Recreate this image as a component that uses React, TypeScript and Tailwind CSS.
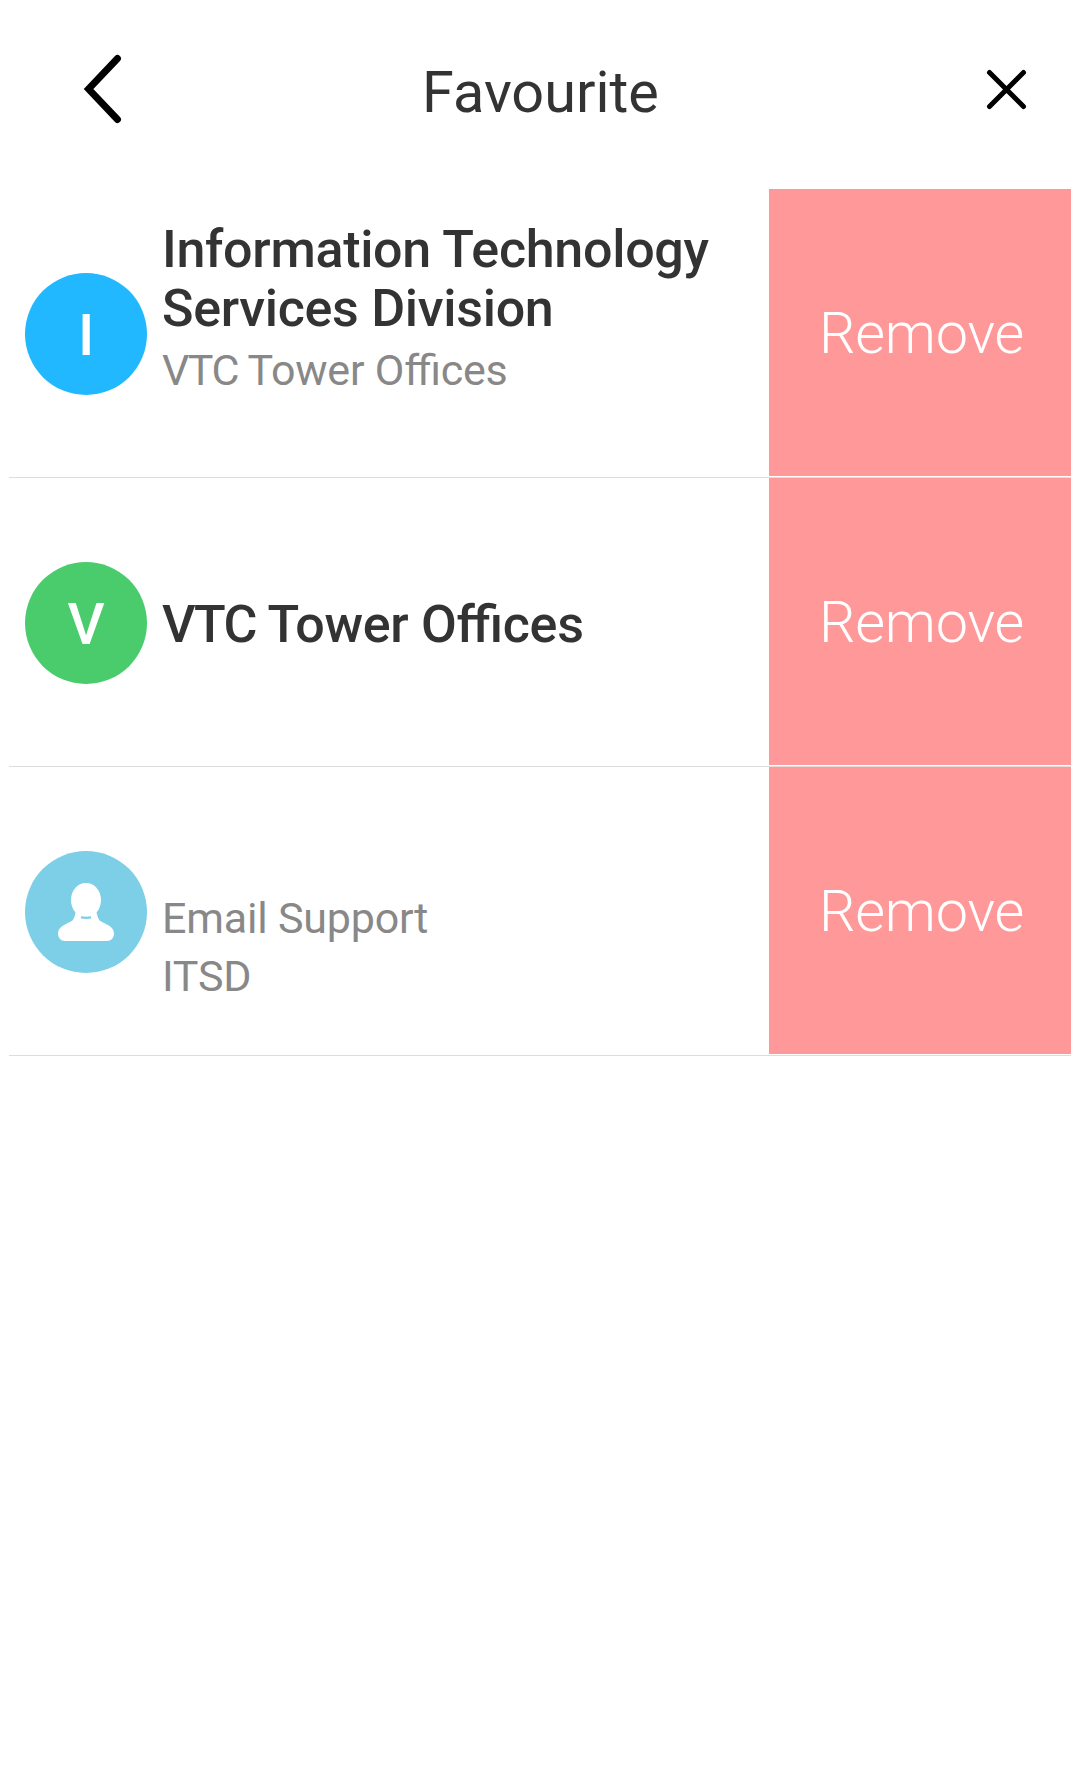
import React from 'react';

const items = [
  { id: 1, initial: 'I', color: 'bg-[#22b8ff]', offset: 'pt-[31px]', title: 'Information Technology Services Division', lines: ['VTC Tower Offices'] },
  { id: 2, initial: 'V', color: 'bg-[#4acc6d]', offset: 'pt-[117px]', title: 'VTC Tower Offices', lines: [] },
  { id: 3, initial: '', color: 'bg-[#7dcfe8]', offset: 'pt-[119px]', title: '', lines: ['Email Support', 'ITSD'] },
];

const PersonIcon: React.FC = () => (
  <svg className="mt-[-4px]" width="56" height="58" viewBox="0 0 56 58" fill="#fff">
    <path d="M28 0C36.500 0 43 7.500 43 17C43 22 41.500 26 38.500 29.500C39.500 33 40 35 41.500 37.500C47 41 56 43 56 50.500C56 55 53 58 49 58H7C3 58 0 55 0 50.500C0 43 9 41 14.500 37.500C16 35 17 33 17.500 29.500C14.500 26 13 22 13 17C13 7.500 19.500 0 28 0Z" />
    <path d="M23 34.400Q28 35.200 33 34.400" fill="none" stroke="#7dcfe8" strokeWidth="2.200" />
  </svg>
);

// tightens the acronym at the start of a label
const Label: React.FC<{ text: string }> = ({ text }) =>
  text.startsWith('VTC') ? (
    <>
      <span className="tracking-[-1.5px]">VTC</span>
      {text.slice(3)}
    </>
  ) : (
    <>{text}</>
  );

const App: React.FC = () => {
  return (
    <div className="min-h-screen bg-white font-['Roboto',sans-serif] text-[#333]">
      <header className="flex h-[189px] items-start justify-between px-[52px]">
        <button className="mt-[54px] w-[72px] pl-[31px]">
          <svg width="40" height="70" viewBox="0 0 40 70" fill="none" stroke="#000" strokeWidth="6.9" strokeLinecap="round">
            <path d="M34.500 4.500L5.500 35L34.500 65.500" />
          </svg>
        </button>
        <h1 className="mt-[57.5px] pl-px text-[57.6px] leading-[70px]">Favourite</h1>
        <button className="mt-[68px] flex w-[72px] justify-end">
          <svg width="43" height="43" viewBox="0 0 43 43" stroke="#000" strokeWidth="5" strokeLinecap="round">
            <path d="M4.500 4.500L38.500 38.500M38.500 4.500L4.500 38.500" />
          </svg>
        </button>
      </header>
      <ul className="mx-[9px]">
        {items.map((item) => (
          <li key={item.id} className="flex h-[289px] border-b border-[#ddd]">
            <div className={`ml-[16.4px] mt-[84.4px] flex size-[121.5px] shrink-0 items-center justify-center rounded-full pt-[4px] text-[57.6px] font-medium leading-none text-white ${item.color}`}>
              {item.initial || <PersonIcon />}
            </div>
            <div className={`ml-[15.1px] flex-1 tracking-[-0.2px] [font-feature-settings:'liga'] ${item.offset}`}>
              {item.title && <h2 className="text-[52px] font-medium leading-[59px] tracking-[-0.3px]"><Label text={item.title} /></h2>}
              <div className="pt-[5px]">
                {item.lines.map((line) => (
                  <p key={line} className="mb-[3px] text-[43px] leading-[55px] text-[#888]"><Label text={line} /></p>
                ))}
              </div>
            </div>
            <button className="h-[287px] w-[302px] shrink-0 bg-[#ff9899] pl-[3px] pt-[4px] text-[57.6px] font-light tracking-[-0.2px] text-white">Remove</button>
          </li>
        ))}
      </ul>
    </div>
  );
};

export default App;
